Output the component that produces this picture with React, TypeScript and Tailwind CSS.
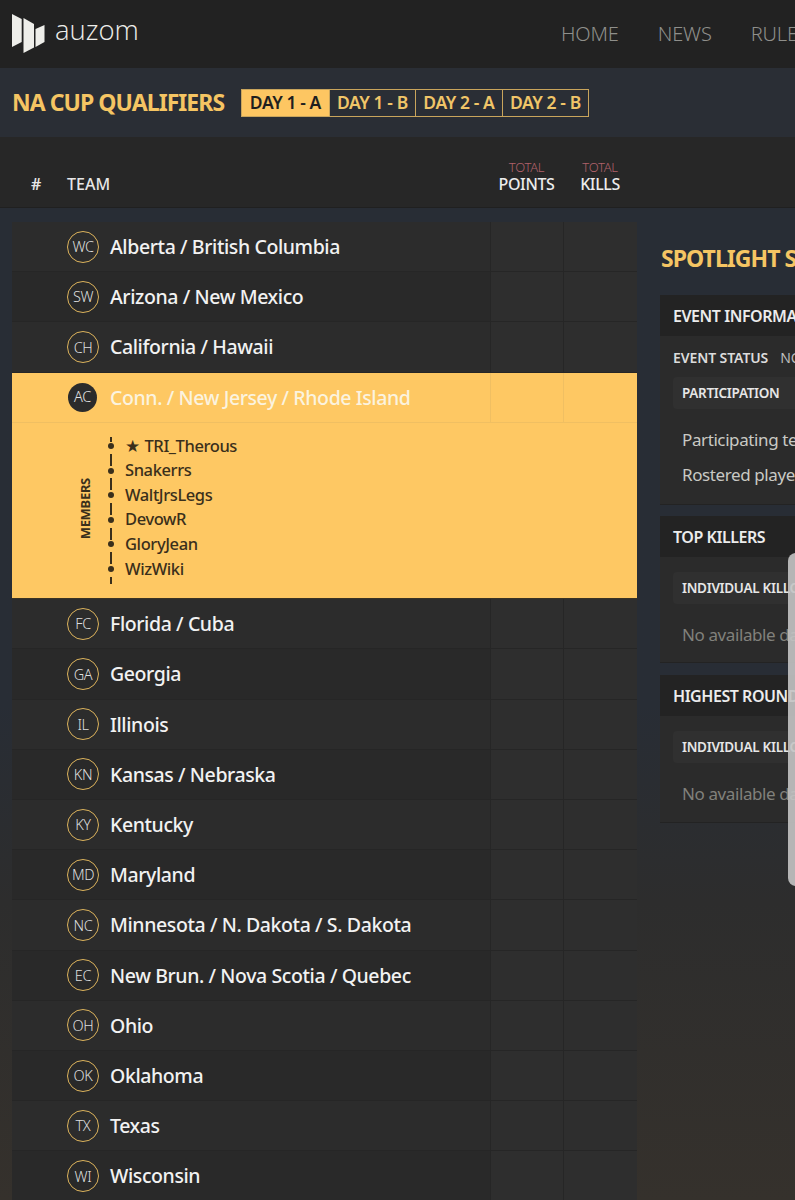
const font = "font-['Noto_Sans','Open_Sans',sans-serif]"

const topRows = [
  { code: 'WC', name: 'Alberta / British Columbia' },
  { code: 'SW', name: 'Arizona / New Mexico' },
  { code: 'CH', name: 'California / Hawaii' },
]

const bottomRows = [
  { code: 'FC', name: 'Florida / Cuba' },
  { code: 'GA', name: 'Georgia' },
  { code: 'IL', name: 'Illinois' },
  { code: 'KN', name: 'Kansas / Nebraska' },
  { code: 'KY', name: 'Kentucky' },
  { code: 'MD', name: 'Maryland' },
  { code: 'NC', name: 'Minnesota / N. Dakota / S. Dakota' },
  { code: 'EC', name: 'New Brun. / Nova Scotia / Quebec' },
  { code: 'OH', name: 'Ohio' },
  { code: 'OK', name: 'Oklahoma' },
  { code: 'TX', name: 'Texas' },
  { code: 'WI', name: 'Wisconsin' },
]

const members = ['★ TRI_Therous', 'Snakerrs', 'WaltJrsLegs', 'DevowR', 'GloryJean', 'WizWiki']
const tabs = ['DAY 1 - A', 'DAY 1 - B', 'DAY 2 - A', 'DAY 2 - B']

const Logo = () => (
  <svg width="34" height="40" viewBox="0 0 34 40" className="shrink-0">
    <polygon points="0,0 9.7,5 9.7,28 0,33" fill="#eeeeea" />
    <polygon points="11.5,4 22,10 22,33.5 11.5,39" fill="#eeeeea" />
    <polygon points="23.5,15 32.5,11 32.5,28 23.5,33" fill="#eeeeea" />
  </svg>
)

const Row = ({ code, name, odd }: { code: string; name: string; odd: boolean }) => (
  <div className={`flex h-[50.2px] items-center border-b border-[#262626] ${odd ? 'bg-[#2c2c2c]' : 'bg-[#292929]'}`}>
    <div className="flex w-[478px] items-center pl-[55px]">
      <div className="flex h-8 w-8 shrink-0 items-center justify-center rounded-full border-[1.5px] border-[#dcb35c] pt-px text-[14.5px] font-light tracking-[-0.4px] text-[#dedede]">
        {code}
      </div>
      <span className="ml-[11px] whitespace-nowrap text-[19.5px] font-medium tracking-[-0.4px] text-[#f2f2f2]">{name}</span>
    </div>
    <div className="h-full w-[73px] border-l border-[#262626] bg-[#2e2e2e]" />
    <div className="h-full w-[74px] border-l border-[#262626] bg-[#2e2e2e]" />
  </div>
)

const SubHead = ({ label }: { label: string }) => (
  <div className="flex h-8 items-center rounded-sm bg-[#303030] pl-[9px] text-[13.5px] font-semibold tracking-[-0.3px] whitespace-nowrap text-[#e6e6e6]">
    {label}
  </div>
)

const Panel = ({ title, children, className }: { title: string; children: React.ReactNode; className: string }) => (
  <div className={`border-b border-[#232323] bg-[#2b2b2b] ${className}`}>
    <div className="flex h-[41px] items-center bg-[#232323] pl-[13px] text-[16px] font-semibold tracking-[-0.45px] whitespace-nowrap text-[#ececec]">
      {title}
    </div>
    {children}
  </div>
)

export default function App() {
  return (
    <div className={`relative h-[1200px] w-[795px] overflow-hidden bg-[#282c33] ${font}`}>
      {/* top nav */}
      <div className="flex h-[68px] items-center justify-between bg-[#222222] pl-3">
        <div className="flex items-center">
          <Logo />
          <span className="ml-[9px] mt-[-8px] font-['Open_Sans',sans-serif] text-[27.5px] font-light text-[#eeeeea]">auzom</span>
        </div>
        <div className="flex w-[234px] shrink-0 gap-[39px] overflow-hidden text-[20px] font-light tracking-[-0.15px] whitespace-nowrap text-[#8f8f8b]">
          <span>HOME</span>
          <span>NEWS</span>
          <span>RULES</span>
        </div>
      </div>

      {/* title + tabs */}
      <div className="flex h-[69px] items-center bg-[#2a2e35] pl-3">
        <h1 className="text-[23px] font-bold tracking-[-0.95px] whitespace-nowrap text-[#f5c563]">NA CUP QUALIFIERS</h1>
        <div className="ml-[17px] flex h-7 border border-[#c9a55c]">
          {tabs.map((tab, idx) => (
            <div
              key={tab}
              className={`flex w-[86.5px] items-center justify-center text-[17.5px] font-semibold tracking-[-0.4px] whitespace-nowrap ${
                idx === 0 ? 'bg-[#fdc662] text-[#1f1f1f]' : 'border-l border-[#c9a55c] text-[#f0c568]'
              }`}
            >
              {tab}
            </div>
          ))}
        </div>
      </div>

      {/* table header */}
      <div className="flex h-[71px] border-b border-[#202020] bg-[#272727]">
        <div className="w-[67px] self-end pb-[11px] pl-[31px] text-[16px] font-semibold text-[#e6e6e6]">#</div>
        <div className="w-[423px] self-end pb-[11px] text-[16px] font-medium text-[#e6e6e6]">TEAM</div>
        <div className="flex w-[73px] flex-col items-center self-end pb-[15px] leading-none">
          <span className="text-[13px] font-light tracking-[-0.3px] text-[#b0616a]">TOTAL</span>
          <span className="mt-[2px] text-[16px] font-medium tracking-[-0.4px] text-[#ececec]">POINTS</span>
        </div>
        <div className="flex w-[74px] flex-col items-center self-end pb-[15px] leading-none">
          <span className="text-[13px] font-light tracking-[-0.3px] text-[#b0616a]">TOTAL</span>
          <span className="mt-[2px] text-[16px] font-medium tracking-[-0.4px] text-[#ececec]">KILLS</span>
        </div>
      </div>

      {/* body */}
      <div className="flex h-[992px] bg-linear-to-b from-[#282d35] from-50% via-[#2d2d2d] via-70% to-[#35312c] pl-3 pt-[14px]">
        <div className="w-[625px] shrink-0">
          {topRows.map((row, idx) => (
            <Row key={row.code} code={row.code} name={row.name} odd={idx % 2 === 0} />
          ))}

          {/* expanded team */}
          <div className="bg-[#fec863]">
            <div className="flex h-[50.2px] items-center border-b border-[#f0bf62]">
              <div className="flex w-[478px] items-center pl-[56px]">
                <div className="flex h-[29px] w-[29px] shrink-0 items-center justify-center rounded-full bg-[#2b2b2b] text-[14.5px] font-light tracking-[-0.4px] text-[#e4e4e4]">
                  AC
                </div>
                <span className="ml-[13px] whitespace-nowrap text-[19.5px] font-medium tracking-[-0.4px] text-[#fbf3df]">
                  Conn. / New Jersey / Rhode Island
                </span>
              </div>
              <div className="h-full w-[73px] border-l border-[#f0bf62]" />
              <div className="h-full w-[74px] border-l border-[#f0bf62]" />
            </div>
            <div className="flex h-[176.5px] items-start border-b border-[#3a3324]">
              <div className="ml-[66px] mt-[11px] flex h-[150px] w-4 items-center justify-center">
                <span className="text-[13px] font-bold tracking-[-0.3px] text-[#3a2f1b] [writing-mode:vertical-rl] rotate-180">MEMBERS</span>
              </div>
              <div className="relative ml-[16px] mt-[11px] h-[150px] pl-[15px]">
                <span className="absolute left-0 top-[3px] h-[5px] w-[2px] bg-[#3a2f1b]" />
                {members.map((member, idx) => (
                  <div key={member} className="relative flex h-[24.6px] items-center whitespace-nowrap text-[16.5px] font-medium tracking-[-0.4px] [word-spacing:1px] text-[#3a2f1b]">
                    <span className="absolute left-[-17px] h-[6px] w-[6px] rounded-full bg-[#3a2f1b]" />
                    <span className={`absolute left-[-15px] top-[20px] w-[2px] bg-[#3a2f1b] ${idx === 5 ? 'h-[7px]' : 'h-[12px]'}`} />
                    {member}
                  </div>
                ))}
              </div>
            </div>
          </div>

          {bottomRows.map((row, idx) => (
            <Row key={row.code} code={row.code} name={row.name} odd={idx % 2 === 0} />
          ))}
        </div>

        {/* spotlight column */}
        <div className="ml-[23px] w-[300px] shrink-0">
          <h2 className="ml-px mt-[21px] text-[23px] leading-[30px] font-bold tracking-[-0.95px] whitespace-nowrap text-[#f5c563]">SPOTLIGHT SPONSOR</h2>
          <Panel title="EVENT INFORMATION" className="mt-[22px] h-[210px]">
            <div className="px-[13px] pt-[11px]">
              <div className="flex items-center text-[14px] font-semibold tracking-[-0.1px] whitespace-nowrap text-[#dcdcdc]">
                EVENT STATUS
                <span className="ml-3 font-normal text-[#bdbdbd]">NOT STARTED</span>
              </div>
              <div className="mt-[9px]">
                <SubHead label="PARTICIPATION" />
              </div>
              <div className="mt-[13px] pl-[9px] text-[17px] leading-[35px] font-normal tracking-[-0.4px] whitespace-nowrap text-[#c9c9c4]">
                <div>Participating teams</div>
                <div>Rostered players</div>
              </div>
            </div>
          </Panel>
          <Panel title="TOP KILLERS" className="mt-[11px] h-[147px]">
            <div className="px-[13px] pt-[15px]">
              <SubHead label="INDIVIDUAL KILLCOUNT" />
              <div className="mt-[18px] pl-[9px] text-[17px] font-normal tracking-[-0.4px] whitespace-nowrap text-[#81817c]">No available data</div>
            </div>
          </Panel>
          <Panel title="HIGHEST ROUND" className="mt-[12px] h-[148px]">
            <div className="px-[13px] pt-[15px]">
              <SubHead label="INDIVIDUAL KILLCOUNT" />
              <div className="mt-[18px] pl-[9px] text-[17px] font-normal tracking-[-0.4px] whitespace-nowrap text-[#81817c]">No available data</div>
            </div>
          </Panel>
        </div>
      </div>

      {/* phone scrollbar handle */}
      <div className="absolute left-[788px] top-[553px] h-[333px] w-2 rounded-l-lg bg-[#c4c4c4]/90" />
    </div>
  )
}
